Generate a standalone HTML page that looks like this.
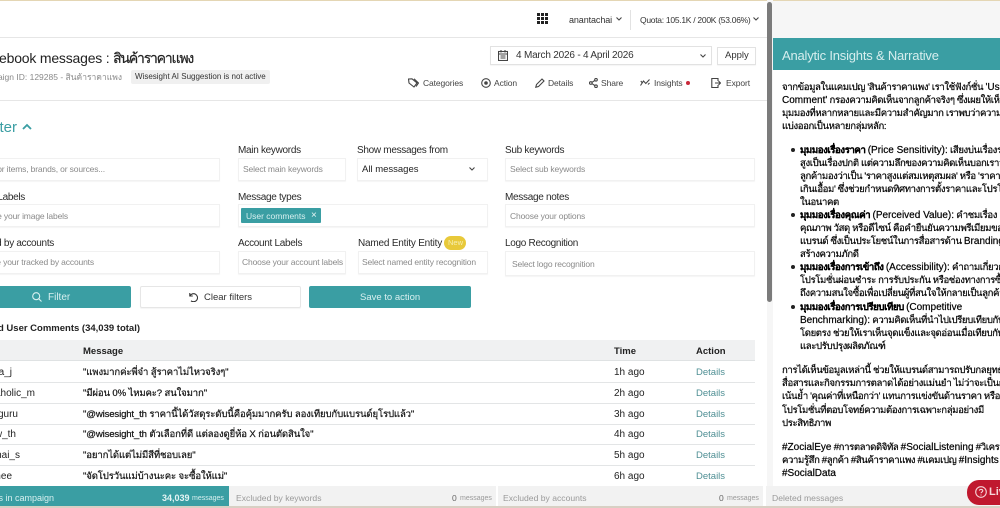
<!DOCTYPE html>
<html lang="th"><head><meta charset="utf-8"><title>Facebook messages</title>
<style>
html,body{margin:0;padding:0;width:1000px;height:508px;overflow:hidden;background:#fff}
body{position:relative;font-family:"Liberation Sans","Noto Sans CJK SC",sans-serif;color:#222;font-size:10px}
#root{position:absolute;left:0;top:0;width:1000px;height:508px;overflow:hidden;background:#fff}
.t{position:absolute;white-space:nowrap;line-height:14px;height:14px}
.b{position:absolute;box-sizing:border-box}
.f{position:absolute;box-sizing:border-box;background:#fff;border:1px solid #f1f1f1;box-shadow:0 1px 1px #f4f4f4}
.l{font-size:10px;letter-spacing:-.3px;color:#2a2a2a}
.p{font-size:8.5px;letter-spacing:-.15px;color:#8a8a8a}
.r{font-size:10px;color:#222}
.m{font-size:9.6px;letter-spacing:-.15px;color:#111;-webkit-text-stroke:.2px #111}
.d{font-size:9.5px;color:#4f8f94}
.a{font-size:8.5px;letter-spacing:-.1px;color:#444}
.n{font-size:9.6px;letter-spacing:-.4px;color:#000;-webkit-text-stroke:.2px #000}
.e{font-size:10px;letter-spacing:0}
svg{position:absolute;fill:none;stroke:#444;stroke-width:1.1}
</style></head><body><div id="root">
<div class="b" style="left:0;top:0;width:1000px;height:1px;background:#e4d6b4"></div>
<div class="b" style="left:0;top:37px;width:767px;height:1px;background:#e6e6e6"></div>
<div class="b" style="left:0;top:100px;width:767px;height:1px;background:#e6e6e6"></div>

<!-- top bar -->
<svg style="left:537px;top:13px" width="11" height="11" viewBox="0 0 11 11"><g fill="#222" stroke="none"><rect x="0" y="0" width="3" height="3"/><rect x="4" y="0" width="3" height="3"/><rect x="8" y="0" width="3" height="3"/><rect x="0" y="4" width="3" height="3"/><rect x="4" y="4" width="3" height="3"/><rect x="8" y="4" width="3" height="3"/><rect x="0" y="8" width="3" height="3"/><rect x="4" y="8" width="3" height="3"/><rect x="8" y="8" width="3" height="3"/></g></svg>
<div class="t" style="left:569px;top:13px;font-size:9px;letter-spacing:-.1px;color:#333">anantachai</div>
<svg style="left:616px;top:17px" width="6" height="4" viewBox="0 0 6 4"><path d="M.5.5 3 3 5.500.5"/></svg>
<div class="b" style="left:630px;top:10px;width:1px;height:20px;background:#e2e2e2"></div>
<div class="t" style="left:640px;top:13px;font-size:8.5px;letter-spacing:-.28px;color:#333">Quota: 105.1K / 200K (53.06%)</div>
<svg style="left:753px;top:17px" width="6" height="4" viewBox="0 0 6 4"><path d="M.5.5 3 3 5.500.5"/></svg>

<!-- title -->
<div class="t" style="right:807px;top:49px;font-size:14px;letter-spacing:-.2px;line-height:18px;height:18px;color:#222">Facebook messages : <span style="letter-spacing:-1.2px;-webkit-text-stroke:.2px #222">สินค้าราคาแพง</span></div>
<div class="t" style="right:878px;top:70px;font-size:8.5px;color:#8a8a8a">Campaign ID: 129285 - สินค้าราคาแพง</div>
<div class="b" style="left:131px;top:70px;width:139px;height:14px;background:#f0f0f0;border-radius:2px"></div>
<div class="t" style="left:135px;top:70px;font-size:8px;color:#333">Wisesight AI Suggestion is not active</div>

<!-- date -->
<div class="f" style="left:490px;top:46px;width:222px;height:19px;border-color:#e2e2e2"></div>
<svg style="left:498px;top:50px" width="10" height="11" viewBox="0 0 10 11"><rect x=".5" y="1.500" width="9" height="9" /><path d="M.5 4h9M3 0v2.500M7 0v2.500M2.500 6h5M2.500 8h5"/></svg>
<div class="t" style="left:516px;top:49px;font-size:10px;letter-spacing:-.2px;color:#333">4 March 2026 - 4 April 2026</div>
<svg style="left:700px;top:54px" width="6" height="4" viewBox="0 0 6 4"><path d="M.5.5 3 3 5.500.5"/></svg>
<div class="f" style="left:717px;top:47px;width:39px;height:18px;border-color:#e2e2e2"></div>
<div class="t" style="left:725px;top:49px;font-size:9.5px;color:#333">Apply</div>

<!-- actions -->
<svg style="left:408px;top:78px" width="11" height="10" viewBox="0 0 11 10"><path d="M.5 1 4 .800 9 5 6 9 1 5ZM6 .800 10.500 5 8 8.500"/></svg>
<div class="t a" style="left:423px;top:76px">Categories</div>
<svg style="left:481px;top:78px" width="10" height="10" viewBox="0 0 10 10"><circle cx="5" cy="5" r="4.300"/><circle cx="5" cy="5" r="1.800" fill="#444" stroke="none"/></svg>
<div class="t a" style="left:494px;top:76px">Action</div>
<svg style="left:535px;top:78px" width="10" height="10" viewBox="0 0 10 10"><path d="M.8 9.200 1.500 6.500 7 1l2 2-5.500 5.500Z"/></svg>
<div class="t a" style="left:548px;top:76px">Details</div>
<svg style="left:589px;top:78px" width="9" height="10" viewBox="0 0 9 10"><circle cx="1.800" cy="5" r="1.300"/><circle cx="7" cy="1.800" r="1.300"/><circle cx="7" cy="8.200" r="1.300"/><path d="M3 4.300 5.800 2.500M3 5.700 5.800 7.500"/></svg>
<div class="t a" style="left:601px;top:76px">Share</div>
<svg style="left:640px;top:78px" width="10" height="9" viewBox="0 0 10 9"><path d="M.5 7.500 3.500 3 5.800 5.500 9.500 1.500M.8 3 2 4.500M8 6.500 9.500 5"/></svg>
<div class="t a" style="left:654px;top:76px">Insights</div>
<div class="b" style="left:686px;top:81px;width:4px;height:4px;border-radius:50%;background:#c8283a"></div>
<svg style="left:711px;top:78px" width="10" height="10" viewBox="0 0 10 10"><path d="M7 3V.5H.8v9H7V7M4 5h5.500M7.500 3l2 2-2 2"/></svg>
<div class="t a" style="left:726px;top:76px">Export</div>

<!-- filter -->
<div class="t" style="right:983px;top:119px;font-size:15px;line-height:17px;height:17px;color:#3a9ea3">Filter</div>
<svg style="left:22px;top:123px;stroke:#3a9ea3;stroke-width:1.800" width="10" height="7" viewBox="0 0 10 7"><path d="M1 6 5 2l4 4"/></svg>

<div class="f" style="left:-10px;top:158px;width:230px;height:23px"></div>
<div class="t p" style="right:895px;top:162px">Search for items, brands, or sources...</div>
<div class="t l" style="left:238px;top:144px">Main keywords</div>
<div class="f" style="left:238px;top:158px;width:108px;height:23px"></div>
<div class="t p" style="left:243px;top:162px">Select main keywords</div>
<div class="t l" style="left:357px;top:144px">Show messages from</div>
<div class="f" style="left:357px;top:158px;width:131px;height:23px"></div>
<div class="t" style="left:362px;top:163px;font-size:9.5px;color:#222">All messages</div>
<svg style="left:469px;top:167px" width="6" height="4" viewBox="0 0 6 4"><path d="M.5.5 3 3 5.500.5"/></svg>
<div class="t l" style="left:505px;top:144px">Sub keywords</div>
<div class="f" style="left:505px;top:158px;width:250px;height:23px"></div>
<div class="t p" style="left:510px;top:162px">Select sub keywords</div>

<div class="t l" style="right:975px;top:191px">Image Labels</div>
<div class="f" style="left:-10px;top:204px;width:230px;height:23px"></div>
<div class="t p" style="right:932px;top:209px">Choose your image labels</div>
<div class="t l" style="left:238px;top:191px">Message types</div>
<div class="f" style="left:238px;top:204px;width:250px;height:23px"></div>
<div class="b" style="left:241px;top:208px;width:80px;height:15px;background:#3a9ea3;border-radius:1px"></div>
<div class="t" style="left:246px;top:209px;font-size:8.5px;color:#d8f0f0">User comments</div>
<div class="t" style="left:311px;top:209px;font-size:10px;color:#e8f6f6">×</div>
<div class="t l" style="left:505px;top:191px">Message notes</div>
<div class="f" style="left:505px;top:204px;width:250px;height:23px"></div>
<div class="t p" style="left:510px;top:209px">Choose your options</div>

<div class="t l" style="right:946px;top:237px">Tracked by accounts</div>
<div class="f" style="left:-10px;top:251px;width:230px;height:23px"></div>
<div class="t p" style="right:906px;top:255px">Choose your tracked by accounts</div>
<div class="t l" style="left:238px;top:237px">Account Labels</div>
<div class="f" style="left:238px;top:251px;width:108px;height:23px"></div>
<div class="t p" style="left:242px;top:255px">Choose your account labels</div>
<div class="t l" style="left:358px;top:237px;letter-spacing:-.2px">Named Entity Entity</div>
<div class="b" style="left:444px;top:236px;width:22px;height:14px;border-radius:7px;background:#e8c93a"></div>
<div class="t" style="left:448px;top:236px;font-size:7.5px;color:#f6eeb0">New</div>
<div class="f" style="left:358px;top:251px;width:130px;height:23px"></div>
<div class="t p" style="left:362px;top:255px">Select named entity recognition</div>
<div class="t l" style="left:505px;top:237px">Logo Recognition</div>
<div class="f" style="left:505px;top:251px;width:250px;height:25px"></div>
<div class="t p" style="left:512px;top:257px">Select logo recognition</div>

<!-- buttons -->
<div class="b" style="left:-5px;top:286px;width:136px;height:22px;background:#3a9ea3;border-radius:2px"></div>
<svg style="left:32px;top:292px;stroke:#d8f0f0" width="10" height="10" viewBox="0 0 10 10"><circle cx="4.200" cy="4.200" r="3.500"/><path d="M6.800 6.800 9.500 9.500"/></svg>
<div class="t" style="left:48px;top:291px;font-size:10px;color:#d8f0f0">Filter</div>
<div class="f" style="left:140px;top:286px;width:161px;height:22px;border-color:#e6e6e6;border-radius:2px"></div>
<svg style="left:188px;top:292px;stroke:#333" width="10" height="10" viewBox="0 0 10 10"><path d="M1.800 1v3h3M2 3.800A4 4 0 1 1 3 8.800"/></svg>
<div class="t" style="left:204px;top:291px;font-size:9.5px;color:#333">Clear filters</div>
<div class="b" style="left:309px;top:286px;width:162px;height:22px;background:#3a9ea3;border-radius:2px"></div>
<div class="t" style="left:360px;top:291px;font-size:9.5px;color:#d8f0f0">Save to action</div>

<!-- table -->
<div class="t" style="right:860px;top:322px;font-size:9.5px;font-weight:bold;color:#222">Filtered User Comments (34,039 total)</div>
<div class="b" style="left:0;top:340px;width:755px;height:21px;background:#f0f1f2;border-bottom:1px solid #dfe2e3"></div>
<div class="t" style="left:83px;top:345px;font-size:9.5px;font-weight:bold">Message</div>
<div class="t" style="left:614px;top:345px;font-size:9.5px;font-weight:bold">Time</div>
<div class="t" style="left:696px;top:345px;font-size:9.5px;font-weight:bold">Action</div>
<div class="b" style="left:0;top:382px;width:755px;height:1px;background:#e3e5e6"></div>
<div class="b" style="left:0;top:403px;width:755px;height:1px;background:#e3e5e6"></div>
<div class="b" style="left:0;top:424px;width:755px;height:1px;background:#e3e5e6"></div>
<div class="b" style="left:0;top:444px;width:755px;height:1px;background:#e3e5e6"></div>
<div class="b" style="left:0;top:465px;width:755px;height:1px;background:#e3e5e6"></div>

<div class="t r" style="right:988px;top:366px">maria_j</div>
<div class="t m" style="left:83px;top:366px">"แพงมากค่ะพี่จ๋า สู้ราคาไม่ไหวจริงๆ"</div>
<div class="t r" style="left:614px;top:366px">1h ago</div><div class="t d" style="left:696px;top:366px">Details</div>
<div class="t r" style="right:965px;top:387px">bagaholic_m</div>
<div class="t m" style="left:83px;top:387px">"มีผ่อน 0% ไหมคะ? สนใจมาก"</div>
<div class="t r" style="left:614px;top:387px">2h ago</div><div class="t d" style="left:696px;top:387px">Details</div>
<div class="t r" style="right:982px;top:408px">luxguru</div>
<div class="t m" style="left:83px;top:408px">"@wisesight_th ราคานี้ได้วัสดุระดับนี้คือคุ้มมากครับ ลองเทียบกับแบรนด์ยุโรปแล้ว"</div>
<div class="t r" style="left:614px;top:408px">3h ago</div><div class="t d" style="left:696px;top:408px">Details</div>
<div class="t r" style="right:984px;top:428px">review_th</div>
<div class="t m" style="left:83px;top:428px">"@wisesight_th ตัวเลือกที่ดี แต่ลองดูยี่ห้อ X ก่อนตัดสินใจ"</div>
<div class="t r" style="left:614px;top:428px">4h ago</div><div class="t d" style="left:696px;top:428px">Details</div>
<div class="t r" style="right:980px;top:449px">thai_s</div>
<div class="t m" style="left:83px;top:449px">"อยากได้แต่ไม่มีสีที่ชอบเลย"</div>
<div class="t r" style="left:614px;top:449px">5h ago</div><div class="t d" style="left:696px;top:449px">Details</div>
<div class="t r" style="right:988px;top:470px">mee</div>
<div class="t m" style="left:83px;top:470px">"จัดโปรวันแม่บ้างนะคะ จะซื้อให้แม่"</div>
<div class="t r" style="left:614px;top:470px">6h ago</div><div class="t d" style="left:696px;top:470px">Details</div>

<!-- scrollbar -->
<div class="b" style="left:767px;top:0;width:6px;height:508px;background:#f6f6f6"></div>
<div class="b" style="left:767px;top:2px;width:5px;height:300px;background:#7b7b7b;border-radius:3px"></div>

<!-- right panel -->
<div class="b" style="left:773px;top:1px;width:227px;height:37px;background:#f6f6f6"></div>
<div class="b" style="left:773px;top:38px;width:227px;height:32px;background:#3a9ea3"></div>
<div class="t" style="left:782px;top:47px;font-size:13px;letter-spacing:-.2px;line-height:17px;height:17px;color:#d6eeee">Analytic Insights &amp; Narrative</div>

<div class="t n" style="left:782px;top:81px">จากข้อมูลในแคมเปญ 'สินค้าราคาแพง' เราใช้ฟังก์ชั่น <span class="e">'User</span></div>
<div class="t n" style="left:782px;top:94px"><span class="e">Comment'</span> กรองความคิดเห็นจากลูกค้าจริงๆ ซึ่งเผยให้เห็น</div>
<div class="t n" style="left:782px;top:107px">มุมมองที่หลากหลายและมีความสำคัญมาก เราพบว่าความคิดเห็น</div>
<div class="t n" style="left:782px;top:120px">แบ่งออกเป็นหลายกลุ่มหลัก:</div>

<div class="b" style="left:791px;top:148px;width:4px;height:4px;border-radius:50%;background:#222"></div>
<div class="t n" style="left:800px;top:144px"><b>มุมมองเรื่องราคา</b> <span class="e">(Price Sensitivity):</span> เสียงบ่นเรื่องราคา</div>
<div class="t n" style="left:800px;top:157px">สูงเป็นเรื่องปกติ แต่ความลึกของความคิดเห็นบอกเราว่า</div>
<div class="t n" style="left:800px;top:170px">ลูกค้ามองว่าเป็น 'ราคาสูงแต่สมเหตุสมผล' หรือ 'ราคาแพง</div>
<div class="t n" style="left:800px;top:183px">เกินเอื้อม' ซึ่งช่วยกำหนดทิศทางการตั้งราคาและโปรโมชั่น</div>
<div class="t n" style="left:800px;top:196px">ในอนาคต</div>
<div class="b" style="left:791px;top:213px;width:4px;height:4px;border-radius:50%;background:#222"></div>
<div class="t n" style="left:800px;top:209px"><b>มุมมองเรื่องคุณค่า</b> <span class="e">(Perceived Value):</span> คำชมเรื่อง</div>
<div class="t n" style="left:800px;top:222px">คุณภาพ วัสดุ หรือดีไซน์ คือคำยืนยันความพรีเมียมของ</div>
<div class="t n" style="left:800px;top:235px">แบรนด์ ซึ่งเป็นประโยชน์ในการสื่อสารด้าน <span class="e">Branding</span> และ</div>
<div class="t n" style="left:800px;top:248px">สร้างความภักดี</div>
<div class="b" style="left:791px;top:265px;width:4px;height:4px;border-radius:50%;background:#222"></div>
<div class="t n" style="left:800px;top:261px"><b>มุมมองเรื่องการเข้าถึง</b> <span class="e">(Accessibility):</span> คำถามเกี่ยวกับ</div>
<div class="t n" style="left:800px;top:274px">โปรโมชั่นผ่อนชำระ การรับประกัน หรือช่องทางการซื้อ</div>
<div class="t n" style="left:800px;top:287px">ถึงความสนใจซื้อเพื่อเปลี่ยนผู้ที่สนใจให้กลายเป็นลูกค้า</div>
<div class="b" style="left:791px;top:305px;width:4px;height:4px;border-radius:50%;background:#222"></div>
<div class="t n" style="left:800px;top:301px"><b>มุมมองเรื่องการเปรียบเทียบ</b> <span class="e">(Competitive</span></div>
<div class="t n" style="left:800px;top:314px"><span class="e">Benchmarking):</span> ความคิดเห็นที่นำไปเปรียบเทียบกับคู่แข่ง</div>
<div class="t n" style="left:800px;top:327px">โดยตรง ช่วยให้เราเห็นจุดแข็งและจุดอ่อนเมื่อเทียบกับตลาด</div>
<div class="t n" style="left:800px;top:340px">และปรับปรุงผลิตภัณฑ์</div>

<div class="t n" style="left:782px;top:364px">การได้เห็นข้อมูลเหล่านี้ ช่วยให้แบรนด์สามารถปรับกลยุทธ์การ</div>
<div class="t n" style="left:782px;top:377px">สื่อสารและกิจกรรมการตลาดได้อย่างแม่นยำ ไม่ว่าจะเป็นการ</div>
<div class="t n" style="left:782px;top:390px">เน้นย้ำ 'คุณค่าที่เหนือกว่า' แทนการแข่งขันด้านราคา หรือการจัด</div>
<div class="t n" style="left:782px;top:404px">โปรโมชั่นที่ตอบโจทย์ความต้องการเฉพาะกลุ่มอย่างมี</div>
<div class="t n" style="left:782px;top:417px">ประสิทธิภาพ</div>
<div class="t n" style="left:782px;top:441px"><span class="e">#ZocialEye</span> #การตลาดดิจิทัล <span class="e">#SocialListening</span> #วิเคราะห์</div>
<div class="t n" style="left:782px;top:454px">ความรู้สึก #ลูกค้า #สินค้าราคาแพง #แคมเปญ <span class="e">#Insights</span></div>
<div class="t n" style="left:782px;top:467px"><span class="e">#SocialData</span></div>

<!-- footer -->
<div class="b" style="left:0;top:486px;width:1000px;height:22px;background:#f2f2f2"></div>
<div class="b" style="left:0;top:486px;width:229px;height:22px;background:#3a9ea3"></div>
<div class="t" style="right:946px;top:491px;font-size:9px;color:#d8f0f0">Messages in campaign</div>
<div class="t" style="left:162px;top:491px;font-size:9px;font-weight:bold;color:#e4f4f4">34,039</div>
<div class="t" style="left:192px;top:492px;font-size:7px;color:#d8f0f0">messages</div>
<div class="t" style="left:236px;top:491px;font-size:8.6px;color:#9a9a9a">Excluded by keywords</div>
<div class="t" style="left:452px;top:491px;font-size:8.5px;color:#666">0</div>
<div class="t" style="left:460px;top:492px;font-size:7px;color:#999">messages</div>
<div class="b" style="left:496px;top:486px;width:2px;height:22px;background:#fff"></div>
<div class="t" style="left:503px;top:491px;font-size:8.6px;color:#9a9a9a">Excluded by accounts</div>
<div class="t" style="left:719px;top:491px;font-size:8.5px;color:#666">0</div>
<div class="t" style="left:727px;top:492px;font-size:7px;color:#999">messages</div>
<div class="b" style="left:763px;top:486px;width:3px;height:22px;background:#fff"></div>
<div class="t" style="left:772px;top:491px;font-size:8.6px;color:#9a9a9a">Deleted messages</div>
<div class="b" style="left:0;top:506px;width:1000px;height:2px;background:#d8d0c4"></div>

<div class="b" style="left:967px;top:480px;width:50px;height:25px;border-radius:12px;background:#c0182e"></div>
<svg style="left:975px;top:486px;stroke:#f5d5d8" width="12" height="12" viewBox="0 0 12 12"><circle cx="6" cy="6" r="5.300"/><path d="M4.400 4.600C4.400 3 7.800 3 7.800 4.800 7.800 6 6 6 6 7.300M6 8.500v1"/></svg>
<div class="t" style="left:989px;top:485px;font-size:11px;font-weight:bold;color:#f5d5d8">Live</div>
</div></body></html>
